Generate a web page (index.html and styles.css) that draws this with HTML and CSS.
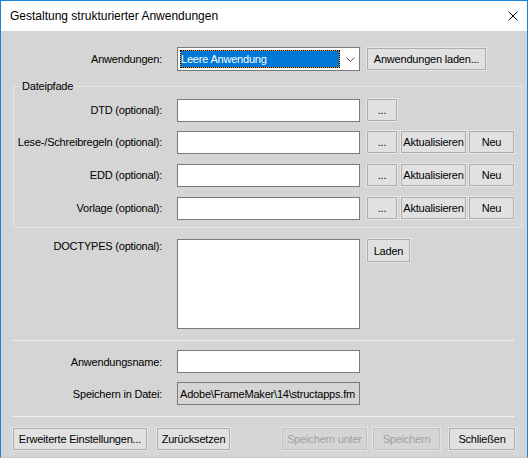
FILE: index.html
```html
<!DOCTYPE html>
<html lang="de">
<head>
<meta charset="utf-8">
<title>Gestaltung strukturierter Anwendungen</title>
<link rel="stylesheet" href="styles.css">
</head>
<body>
<div class="window">
  <div class="titlebar">
    <span class="title">Gestaltung strukturierter Anwendungen</span>
    <svg class="close" width="10" height="10" viewBox="0 0 10 10"><path d="M0.5 0.5 L9.5 9.5 M9.5 0.5 L0.5 9.5" stroke="#000" stroke-width="1" fill="none"/></svg>
  </div>
  <div class="content">
    <div class="row row-app">
      <div class="lbl"><span>Anwendungen:</span></div>
      <div class="combo">
        <div class="combo-sel"><div class="combo-sel-in">Leere Anwendung</div></div>
        <svg class="chev" width="9" height="5" viewBox="0 0 9 5"><path d="M0.5 0.5 L4.5 4.5 L8.5 0.5" stroke="#5a5a5a" stroke-width="1" fill="none"/></svg>
      </div>
      <button class="btn w-laden">Anwendungen laden...</button>
    </div>

    <fieldset class="group">
      <legend>Dateipfade</legend>
      <div class="grow">
        <div class="lbl glbl"><span>DTD (optional):</span></div>
        <div class="tb"></div>
        <button class="btn w-dots">...</button>
      </div>
      <div class="grow g2">
        <div class="lbl glbl"><span>Lese-/Schreibregeln (optional):</span></div>
        <div class="tb"></div>
        <button class="btn w-dots">...</button>
        <button class="btn w-akt">Aktualisieren</button>
        <button class="btn w-neu">Neu</button>
      </div>
      <div class="grow g3">
        <div class="lbl glbl"><span>EDD (optional):</span></div>
        <div class="tb"></div>
        <button class="btn w-dots">...</button>
        <button class="btn w-akt">Aktualisieren</button>
        <button class="btn w-neu">Neu</button>
      </div>
      <div class="grow g3">
        <div class="lbl glbl"><span>Vorlage (optional):</span></div>
        <div class="tb"></div>
        <button class="btn w-dots">...</button>
        <button class="btn w-akt">Aktualisieren</button>
        <button class="btn w-neu">Neu</button>
      </div>
    </fieldset>

    <div class="row row-doc">
      <div class="lbl lbl-top"><span>DOCTYPES (optional):</span></div>
      <div class="listbox"></div>
      <button class="btn w-ladn">Laden</button>
    </div>

    <div class="sep"></div>

    <div class="row row-f1">
      <div class="lbl"><span>Anwendungsname:</span></div>
      <div class="tb"></div>
    </div>
    <div class="row row-f2">
      <div class="lbl"><span>Speichern in Datei:</span></div>
      <div class="tb tb-ro"><span>Adobe\FrameMaker\14\structapps.fm</span></div>
    </div>

    <div class="sep"></div>

    <div class="footer">
      <button class="btn w-erw">Erweiterte Einstellungen...</button>
      <button class="btn w-zur">Zurücksetzen</button>
      <button class="btn w-spu dis">Speichern unter</button>
      <button class="btn w-sp dis">Speichern</button>
      <button class="btn w-sch">Schließen</button>
    </div>
  </div>
</div>
</body>
</html>
```

FILE: styles.css
```css
html, body {
  margin: 0;
  padding: 0;
  background: #ffffff;
}

body {
  font-family: "Liberation Sans", Arial, sans-serif;
  font-size: 11px;
  color: #000;
}

.window {
  width: 528px;
  height: 458px;
  box-sizing: border-box;
  border: 1px solid #1883d7;
  border-bottom-color: #c8c8c8;
  background: #d5d5d5;
  display: flex;
  flex-direction: column;
}

.titlebar {
  height: 30px;
  flex: none;
  background: #ffffff;
  display: flex;
  align-items: center;
  justify-content: space-between;
  padding: 0 9px 0 9px;
}

.title {
  font-size: 12px;
  color: #000;
}

.close {
  display: block;
}

.content {
  flex: 1;
  display: flex;
  flex-direction: column;
  padding-top: 16px;
  letter-spacing: -0.2px;
}

.row {
  display: flex;
  align-items: center;
}

.lbl {
  width: 161px;
  flex: none;
  display: flex;
  justify-content: flex-end;
  white-space: nowrap;
  margin-right: 15px;
}

.glbl {
  width: 148px;
  line-height: 23px;
}

.lbl-top {
  align-self: flex-start;
  padding-top: 1px;
  line-height: 13px;
}

.combo {
  width: 183px;
  height: 24px;
  box-sizing: border-box;
  border: 1px solid #7a7a7a;
  background: #ffffff;
  padding: 2px;
  display: flex;
  align-items: center;
  margin-right: 7px;
}

.combo-sel {
  width: 160px;
  height: 18px;
  box-sizing: border-box;
  border: 1px dotted #000;
  background: #f59a23;
  flex: none;
}

.combo-sel-in {
  height: 100%;
  background: #0078d7;
  color: #ffffff;
  line-height: 16px;
  padding-left: 0;
  white-space: nowrap;
}

.chev {
  display: block;
  margin-left: 6px;
}

.btn {
  height: 22px;
  box-sizing: border-box;
  border: 1px solid #adadad;
  box-shadow: 0 0 0 1px #e6e6e6;
  background: #e1e1e1;
  font-family: inherit;
  font-size: 11px;
  letter-spacing: -0.2px;
  color: #000;
  padding: 0;
  margin: 0;
  display: flex;
  align-items: center;
  justify-content: center;
  white-space: nowrap;
  flex: none;
}

.btn.dis {
  color: #a0a0a0;
  background: #d5d5d5;
  border-color: #c2c2c2;
  box-shadow: 0 0 0 1px #e2e2e2;
}

.w-laden { width: 119px; }
.w-dots { width: 30px; margin-left: 7px; }
.w-akt { width: 65px; margin-left: 4px; }
.w-neu { width: 45px; margin-left: 3px; }
.w-ladn { width: 43px; height: 23px; margin-left: 7px; align-self: flex-start; }

.group {
  margin: 9px 5px 0 12px;
  padding: 6px 0 7px 0;
  border: 1px solid #e4e4e4;
  min-width: 0;
}

.group legend {
  margin-left: 6px;
  padding: 0 2px;
  line-height: 13px;
  font-size: 11px;
}

.grow {
  display: flex;
  align-items: flex-start;
}

.g2 { margin-top: 9px; }
.g3 { margin-top: 10px; }

.tb {
  width: 183px;
  height: 23px;
  box-sizing: border-box;
  border: 1px solid #7a7a7a;
  background: #ffffff;
  flex: none;
}

.tb-ro {
  background: #d5d5d5;
  display: flex;
  justify-content: flex-end;
  align-items: center;
  overflow: hidden;
  white-space: nowrap;
  padding-right: 4px;
}

.tb-ro span {
  flex: none;
}

.row-doc {
  margin-top: 11px;
  align-items: flex-start;
}

.listbox {
  width: 183px;
  height: 90px;
  box-sizing: border-box;
  border: 1px solid #7a7a7a;
  background: #ffffff;
  flex: none;
}

.sep {
  height: 1px;
  background: #f3f3f3;
  margin: 11px 13px 0 12px;
  flex: none;
}

.row-f1 { margin-top: 9px; }
.row-f2 { margin-top: 9px; }

.footer {
  display: flex;
  align-items: center;
  margin: 11px 12px 0 12px;
}

.w-erw { width: 134px; }
.w-zur { width: 73px; margin-left: 10px; }
.w-spu { width: 85px; margin-left: auto; }
.w-sp { width: 67px; margin-left: 6px; }
.w-sch { width: 66px; margin-left: 9px; }
```
